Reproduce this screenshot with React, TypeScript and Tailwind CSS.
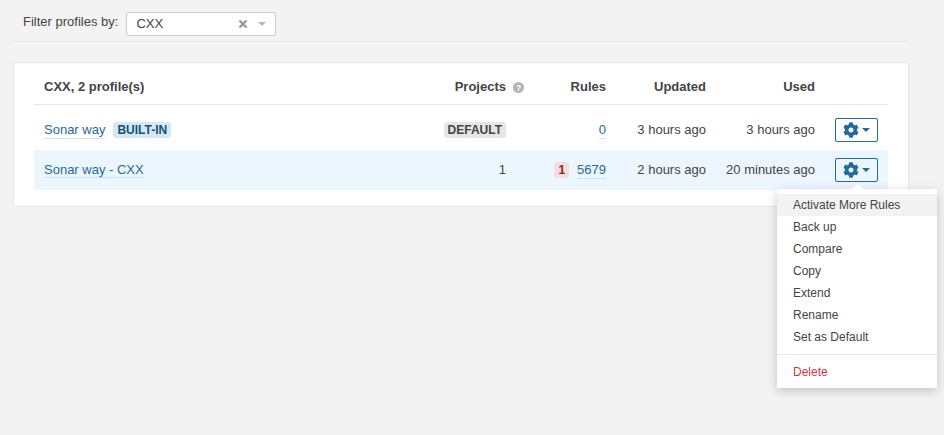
import React from 'react';
import { FaCog } from 'react-icons/fa';

const linkClass = 'text-[#236a97] border-b border-[#cae3f2] leading-[16px]';
const timeCols = 'w-[100px] text-right';

const CaretDown: React.FC<{ className?: string }> = ({ className }) => (
    <svg width="8" height="4" viewBox="0 0 8 4" className={className}>
        <path d="M0 0h8L4 4z" fill="currentColor" />
    </svg>
);

const ActionsButton: React.FC = () => (
    <div className="ml-[20px] w-[43px] h-[24px] border border-[#236a97] rounded-[2px] flex items-center justify-center gap-[3px] text-[#236a97]">
        <FaCog className="w-[16px] h-[16px]" />
        <CaretDown />
    </div>
);

const menuItems = ['Back up', 'Compare', 'Copy', 'Extend', 'Rename', 'Set as Default'];

export default function App() {
    return (
        <div className="w-[944px] h-[435px] overflow-hidden bg-[#f3f3f3] text-[13px] text-[#444] relative" style={{ fontFamily: '"Liberation Sans", Arial, sans-serif' }}>
            <div className="ml-[13px] w-[896px]">
                <div className="h-[42px] pt-[12px] pl-[10px] border-b border-[#e6e6e6] flex items-start">
                    <span className="leading-[20px]">Filter profiles by:</span>
                    <div className="ml-[8px] w-[150px] h-[24px] bg-white border border-[#cdcdcd] rounded-[2px] flex items-center pl-[9px]">
                        <span className="flex-1">CXX</span>
                        <span className="text-[#999] mr-[10px] flex">
                            <svg width="10" height="10" viewBox="0 0 10 10"><path d="M1.5 1.5l7 7M8.5 1.5l-7 7" stroke="currentColor" strokeWidth="2.4" /></svg>
                        </span>
                        <CaretDown className="text-[#b4b4b4] mr-[9px]" />
                    </div>
                </div>

                <div className="mt-[20px] h-[145px] bg-white border border-[#e6e6e6] rounded-[2px] px-[20px] pt-[5px]">
                    <div className="h-[37px] pt-[2px] border-b border-[#e6e6e6] flex items-center pl-[10px] pr-[10px] font-bold">
                        <span className="flex-1">CXX, 2 profile(s)</span>
                        <span className="flex items-center gap-[7px] w-[90px] justify-end mr-[-18px]">Projects
                            <svg width="11" height="11" viewBox="0 0 11 11" className="text-[#b4b4b4]">
                                <circle cx="5.5" cy="5.5" r="5.5" fill="currentColor" />
                                <text x="5.5" y="8.6" textAnchor="middle" fontSize="8.5" fontWeight="700" fill="#fff">?</text>
                            </svg>
                        </span>
                        <span className="w-[100px] text-right">Rules</span>
                        <span className="w-[100px] text-right">Updated</span>
                        <span className="w-[109px] text-right">Used</span>
                        <span className="w-[63px]" />
                    </div>

                    <div className="mt-[5px] h-[40px] flex items-center pl-[10px] pr-[10px]">
                        <div className="flex-1 flex items-center">
                            <span className={linkClass}>Sonar way</span>
                            <span className="ml-[8px] px-[4px] h-[16px] leading-[16px] rounded-[3px] bg-[#d4e9f5] text-[#18506f] font-bold text-[12px]">BUILT-IN</span>
                        </div>
                        <div className="w-[72px] flex justify-end">
                            <span className="px-[4px] h-[16px] leading-[16px] rounded-[3px] bg-[#e6e6e6] font-bold text-[12px]">DEFAULT</span>
                        </div>
                        <div className="w-[100px] flex justify-end"><span className={linkClass}>0</span></div>
                        <div className={timeCols}>3 hours ago</div>
                        <div className="w-[109px] text-right">3 hours ago</div>
                        <ActionsButton />
                    </div>

                    <div className="h-[40px] flex items-center pl-[10px] pr-[10px] bg-[#ecf6fe]">
                        <div className="flex-1"><span className={linkClass}>Sonar way - CXX</span></div>
                        <div className="w-[72px] text-right">1</div>
                        <div className="w-[100px] flex justify-end items-center">
                            <span className="mr-[8px] px-[4px] h-[16px] leading-[16px] rounded-[3px] bg-[#f2dede] text-[#862422] font-bold text-[12px]">1</span>
                            <span className={linkClass}>5679</span>
                        </div>
                        <div className={timeCols}>2 hours ago</div>
                        <div className="w-[109px] text-right">20 minutes ago</div>
                        <ActionsButton />
                    </div>
                </div>
            </div>

            <div className="absolute left-[777px] top-[189px] w-[160px] h-[199px] bg-white shadow-[0_3px_10px_rgba(0,0,0,0.2)] py-[5px] text-[12px]">
                <div className="absolute -top-[5px] left-[75px] w-0 h-0 border-x-[6px] border-x-transparent border-b-[5px] border-b-white" />
                <div className="h-[22px] leading-[22px] pl-[16px] bg-[#f3f3f3]">Activate More Rules</div>
                {menuItems.map((item) => (
                    <div key={item} className="h-[22px] leading-[22px] pl-[16px]">{item}</div>
                ))}
                <div className="mt-[6px] mb-[6px] h-px bg-[#e6e6e6]" />
                <div className="h-[22px] leading-[22px] pl-[16px] text-[#d4333f]">Delete</div>
            </div>
        </div>
    );
}
